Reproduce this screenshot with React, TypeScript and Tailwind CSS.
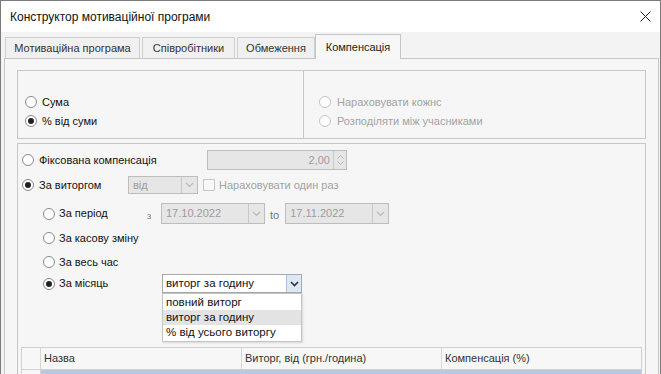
import React from "react";

const font = { fontFamily: '"Liberation Sans", Arial, sans-serif' };

function Radio({ checked, disabled }: { checked?: boolean; disabled?: boolean }) {
  return (
    <span
      className={`flex h-[12px] w-[12px] shrink-0 items-center justify-center rounded-full border bg-white ${
        disabled ? "border-[#c4c4c4] bg-[#f6f6f6]" : "border-[#8a8a8a]"
      }`}
    >
      {checked && <span className="h-[6px] w-[6px] rounded-full bg-[#222]" />}
    </span>
  );
}

function Chevron({ color = "#b0b0b0", w = 2 }: { color?: string; w?: number }) {
  return (
    <svg width="9" height="6" viewBox="0 0 9 6">
      <path d="M1 1 L4.5 4.5 L8 1" fill="none" stroke={color} strokeWidth={w} />
    </svg>
  );
}

function DisabledSelect({ value, w, h }: { value: string; w: string; h: string }) {
  return (
    <div className={`flex ${w} ${h} border border-[#bdbdbd] bg-[#e6e6e6]`}>
      <div className="flex flex-1 items-center pl-[4px] text-[11px] text-[#9c9c9c]">{value}</div>
      <div className="flex w-[16px] items-center justify-center border-l border-[#c8c8c8]">
        <Chevron color="#b8b8b8" w={1.2} />
      </div>
    </div>
  );
}

function Tab({ label, w, active }: { label: string; w: string; active?: boolean }) {
  return active ? (
    <div className={`relative z-10 -mb-px flex h-[25px] ${w} items-center justify-center border border-b-0 border-[#c6c6c6] bg-[#f7f7f7] text-[11px] text-[#222]`}>
      {label}
    </div>
  ) : (
    <div className={`flex h-[21px] ${w} items-center justify-center border border-b-0 border-[#cfcfcf] bg-[#f0f0f0] text-[11px] text-[#333]`}>
      {label}
    </div>
  );
}

export default function App() {
  return (
    <div
      style={font}
      className="h-[374px] w-[661px] overflow-hidden border-l border-r border-t border-[#7a7a7a] bg-[#f3f3f3] text-[#111]"
    >
      {/* title bar */}
      <div className="flex h-[31px] items-center justify-between bg-white pl-[9px] pr-[9px]">
        <span className="text-[12px] text-[#111]">Конструктор мотиваційної програми</span>
        <svg width="11" height="11" viewBox="0 0 11 11">
          <path d="M0.5 0.5 L10.5 10.5 M10.5 0.5 L0.5 10.5" stroke="#222" strokeWidth="1" />
        </svg>
      </div>

      {/* tabs */}
      <div className="flex items-end pl-[4px] pt-[2px]">
        <Tab label="Мотиваційна програма" w="w-[135px]" />
        <div className="ml-[2px]">
          <Tab label="Співробітники" w="w-[93px]" />
        </div>
        <div className="ml-[2px]">
          <Tab label="Обмеження" w="w-[78px]" />
        </div>
        <Tab label="Компенсація" w="w-[86px]" active />
      </div>

      {/* tab panel */}
      <div className="ml-[3px] mr-[1px] h-[400px] border border-[#c6c6c6] bg-[#f6f6f6] pl-[12px] pr-[12px] pt-[11px]">
        {/* group 1 */}
        <div className="flex h-[69px] border border-[#c8c8c8]">
          <div className="flex w-[286px] flex-col justify-end gap-[7px] border-r border-[#c8c8c8] pb-[11px] pl-[7px]">
            <div className="flex h-[12px] items-center gap-[5px] text-[11px]">
              <Radio />
              <span>Сума</span>
            </div>
            <div className="flex h-[12px] items-center gap-[5px] text-[11px]">
              <Radio checked />
              <span>% від суми</span>
            </div>
          </div>
          <div className="flex flex-1 flex-col justify-end gap-[7px] pb-[11px] pl-[15px] text-[#a3a3a3]">
            <div className="flex h-[12px] items-center gap-[6px] text-[11px]">
              <Radio disabled />
              <span>Нараховувати кожнс</span>
            </div>
            <div className="flex h-[12px] items-center gap-[6px] text-[11px]">
              <Radio disabled />
              <span>Розподіляти між учасниками</span>
            </div>
          </div>
        </div>

        {/* group 2 */}
        <div className="mt-[4px] h-[300px] border border-[#c8c8c8] pl-[4px] pt-[6px] text-[11px]">
          <div className="flex h-[20px] items-center">
            <div className="flex w-[185px] items-center gap-[5px]">
              <Radio />
              <span>Фіксована компенсація</span>
            </div>
            <div className="flex h-[20px] w-[140px] border border-[#bdbdbd] bg-[#e6e6e6]">
              <div className="flex flex-1 items-center justify-end pr-[3px] text-[#9c9c9c]">2,00</div>
              <div className="flex w-[13px] flex-col items-center justify-center gap-[2px] border-l border-[#c8c8c8]">
                <svg width="7" height="4" viewBox="0 0 7 4">
                  <path d="M0.5 3.5 L3.5 0.5 L6.5 3.5" fill="none" stroke="#b8b8b8" strokeWidth="1" />
                </svg>
                <svg width="7" height="4" viewBox="0 0 7 4">
                  <path d="M0.5 0.5 L3.5 3.5 L6.5 0.5" fill="none" stroke="#b8b8b8" strokeWidth="1" />
                </svg>
              </div>
            </div>
          </div>

          <div className="mt-[6px] flex h-[18px] items-center">
            <div className="flex w-[106px] items-center gap-[5px]">
              <Radio checked />
              <span>За виторгом</span>
            </div>
            <DisabledSelect value="від" w="w-[70px]" h="h-[18px]" />
            <span className="ml-[5px] h-[12px] w-[12px] border border-[#c8c8c8] bg-[#f8f8f8]" />
            <span className="ml-[4px] text-[#a3a3a3]">Нараховувати один раз</span>
          </div>

          <div className="mt-[9px] flex h-[21px] items-center pl-[21px]">
            <div className="flex w-[104px] items-center gap-[4px]">
              <Radio />
              <span>За період</span>
            </div>
            <span className="w-[14px] pt-[6px] text-[9px] text-[#777]">з</span>
            <DisabledSelect value="17.10.2022" w="w-[104px]" h="h-[21px]" />
            <span className="ml-[5px] mr-[6px] pt-[3px] text-[#777]">to</span>
            <DisabledSelect value="17.11.2022" w="w-[104px]" h="h-[21px]" />
          </div>

          <div className="mt-[2px] flex h-[24px] items-center gap-[4px] pl-[21px]">
            <Radio />
            <span>За касову зміну</span>
          </div>
          <div className="flex h-[24px] items-center gap-[4px] pl-[21px]">
            <Radio />
            <span>За весь час</span>
          </div>

          <div className="flex h-[19px] items-center pl-[21px]">
            <div className="flex w-[119px] items-center gap-[4px]">
              <Radio checked />
              <span>За місяць</span>
            </div>
            <div className="relative flex h-[19px] w-[140px] border border-[#a9a9a9] bg-white">
              <div className="flex flex-1 items-center pl-[3px] text-[11.5px] text-[#111]">виторг за годину</div>
              <div className="flex w-[15px] items-center justify-center border-l border-[#a9c3e0] bg-[#dce8f5]">
                <Chevron color="#333" w={1.6} />
              </div>
              {/* open list */}
              <div className="absolute left-[-1px] top-[18px] z-20 w-[140px] border border-[#c4c4c4] bg-white py-[1px] text-[11.5px] text-[#111] shadow-[1px_1px_2px_rgba(0,0,0,0.12)]">
                <div className="flex h-[15px] items-center pl-[3px]">повний виторг</div>
                <div className="flex h-[15px] items-center bg-[#e3e3e3] pl-[3px]">виторг за годину</div>
                <div className="flex h-[15px] items-center pl-[3px]">% від усього виторгу</div>
              </div>
            </div>
          </div>

          {/* table */}
          <div className="ml-[-1px] mt-[54px] w-[621px] border-l border-r border-t border-[#d0d0d0] text-[11px]">
            <div className="flex h-[21px] bg-[#f7f7f7] text-[#333]">
              <div className="w-[19px] border-r border-[#d6d6d6]" />
              <div className="flex w-[201px] items-center border-r border-[#d6d6d6] pl-[3px]">Назва</div>
              <div className="flex w-[200px] items-center border-r border-[#d6d6d6] pl-[3px]">Виторг, від (грн./година)</div>
              <div className="flex flex-1 items-center pl-[3px]">Компенсація (%)</div>
            </div>
            <div className="flex h-[20px] border-t border-[#d0d0d0]">
              <div className="w-[19px] border-r border-[#d6d6d6] bg-[#f7f7f7]" />
              <div className="flex-1 bg-[#b7c9e2]" />
            </div>
          </div>
        </div>
      </div>
    </div>
  );
}
